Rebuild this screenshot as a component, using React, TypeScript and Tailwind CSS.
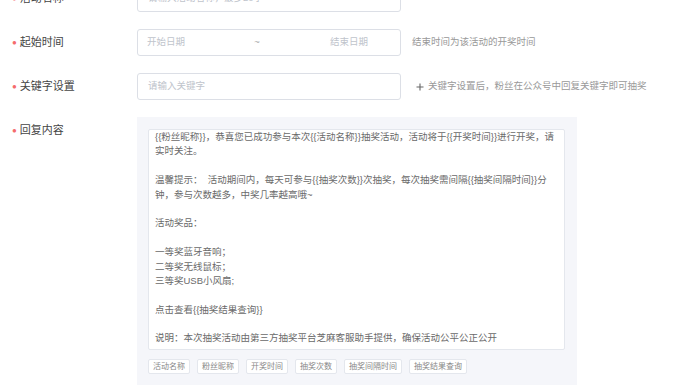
import React from 'react';

const replyLines = [
  '{{粉丝昵称}}，恭喜您已成功参与本次{{活动名称}}抽奖活动，活动将于{{开奖时间}}进行开奖，请',
  '实时关注。',
  '',
  '温馨提示：  活动期间内，每天可参与{{抽奖次数}}次抽奖，每次抽奖需间隔{{抽奖间隔时间}}分',
  '钟，参与次数越多，中奖几率越高哦~',
  '',
  '活动奖品：',
  '',
  '一等奖蓝牙音响；',
  '二等奖无线鼠标；',
  '三等奖USB小风扇;',
  '',
  '点击查看{{抽奖结果查询}}',
  '',
  '说明：本次抽奖活动由第三方抽奖平台芝麻客服助手提供，确保活动公平公正公开',
];

const tags = ['活动名称', '粉丝昵称', '开奖时间', '抽奖次数', '抽奖间隔时间', '抽奖结果查询'];

function Label({ text }: { text: string }) {
  return (
    <div className="w-[137px] shrink-0 pl-[12px] h-[27px] flex items-center text-[11px] text-[#444]">
      <span className="text-[#f56c6c] text-[8px] mr-[3px]">●</span>
      <span>{text}</span>
    </div>
  );
}

export default function App() {
  return (
    <div className="w-[700px] h-[385px] overflow-hidden bg-white font-['Liberation_Sans','Noto_Sans_CJK_SC',sans-serif]">
      <div className="-mt-[15px] flex flex-col gap-[17px]">
        {/* 活动名称 */}
        <div className="flex">
          <Label text="活动名称" />
          <div className="w-[264px] h-[27px] border border-[#dcdfe6] rounded-[3px] flex items-center px-[10px] text-[9.5px] text-[#c0c4cc]">
            请输入活动名称，最多20字
          </div>
        </div>

        {/* 起始时间 */}
        <div className="flex">
          <Label text="起始时间" />
          <div className="w-[264px] h-[27px] border border-[#dcdfe6] rounded-[3px] flex items-center pl-[9px] text-[9.5px] text-[#c0c4cc]">
            <span className="w-[104px]">开始日期</span>
            <span className="w-[12px] text-center text-[#aaa]">~</span>
            <span className="ml-[67px]">结束日期</span>
          </div>
          <div className="ml-[11px] h-[27px] flex items-center text-[9.5px] text-[#999]">
            结束时间为该活动的开奖时间
          </div>
        </div>

        {/* 关键字设置 */}
        <div className="flex">
          <Label text="关键字设置" />
          <div className="w-[264px] h-[27px] border border-[#dcdfe6] rounded-[3px] flex items-center px-[10px] text-[9.5px] text-[#c0c4cc]">
            请输入关键字
          </div>
          <div className="ml-[15px] h-[27px] flex items-center text-[9.5px] text-[#999]">
            <svg width="8" height="8" viewBox="0 0 8 8" className="mr-[4px]">
              <path d="M4 0.5v7M0.5 4h7" stroke="#666" strokeWidth="1.1" />
            </svg>
            关键字设置后，粉丝在公众号中回复关键字即可抽奖
          </div>
        </div>

        {/* 回复内容 */}
        <div className="flex">
          <Label text="回复内容" />
          <div className="w-[440px] bg-[#f5f6fa] pt-[12px] pl-[11px] pr-[12px] pb-[20px]">
            <div className="h-[221px] bg-white border border-[#e4e7ed] rounded-[2px] pl-[6px] text-[9.5px] leading-[14.4px] text-[#6a6a6a] overflow-hidden">
              {replyLines.map((line, i) => (
                <div key={i} className="h-[14.4px] whitespace-pre">
                  {line}
                </div>
              ))}
            </div>
            <div className="mt-[9px] flex gap-[7px]">
              {tags.map((t) => (
                <span
                  key={t}
                  className="h-[15px] px-[4px] flex items-center bg-white border border-[#e4e7ed] rounded-[2px] text-[8px] text-[#888]"
                >
                  {t}
                </span>
              ))}
            </div>
          </div>
        </div>
      </div>
    </div>
  );
}
